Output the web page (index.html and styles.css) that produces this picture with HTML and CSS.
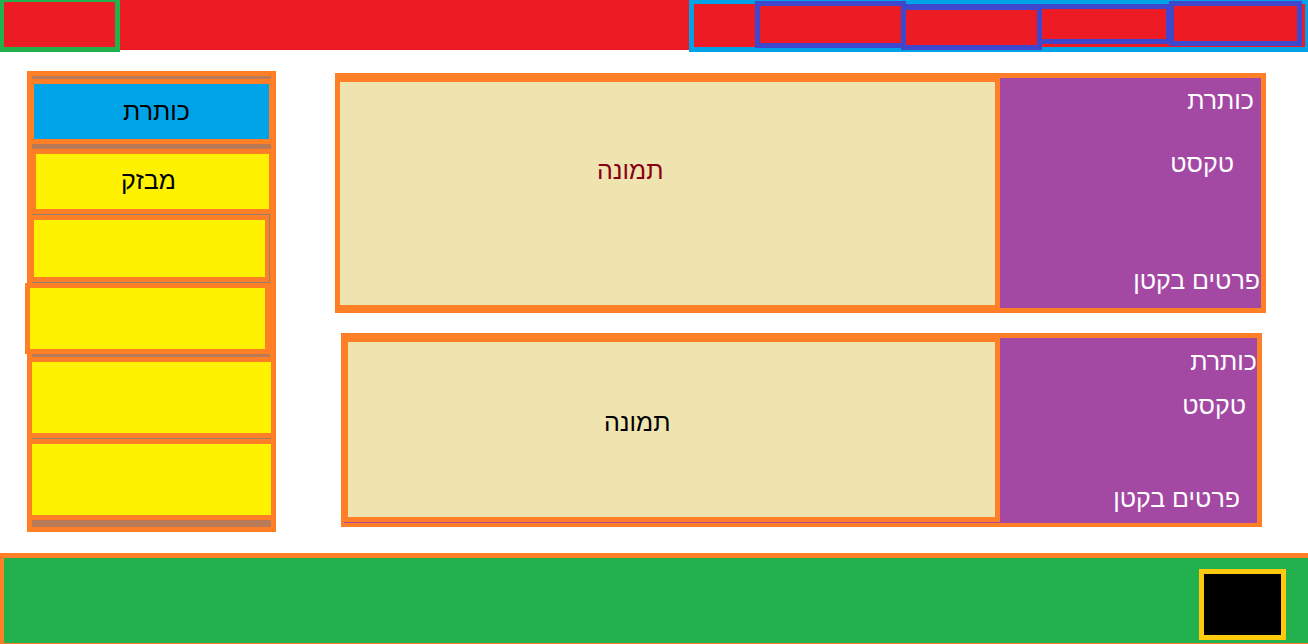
FILE: index.html
```html
<!DOCTYPE html>
<html lang="he">
<head>
<meta charset="utf-8">
<title>Wireframe</title>
<link rel="stylesheet" href="styles.css">
</head>
<body>
<header class="header">
  <div class="logo"></div>
  <nav class="nav">
    <div class="nav-item n1"></div>
    <div class="nav-item n2"></div>
    <div class="nav-item n3"></div>
    <div class="nav-item n4"></div>
  </nav>
</header>

<div class="main">
  <aside class="sidebar">
    <div class="rule r-top"></div>
    <div class="side-title">כותרת</div>
    <div class="rule r-thick"></div>
    <div class="side-flash">מבזק</div>
    <div class="group">
      <div class="side-box g1"></div>
      <div class="sep"></div>
      <div class="g2-wrap"><div class="side-box g2"></div></div>
    </div>
    <div class="rule r-mid"></div>
    <div class="side-box wide"></div>
    <div class="sep wide-sep"></div>
    <div class="side-box wide"></div>
    <div class="rule r-bottom"></div>
  </aside>

  <section class="cards">
    <article class="card card-a">
      <div class="pic pic-a">תמונה</div>
      <div class="info info-a">
        <div class="line a-title">כותרת</div>
        <div class="line a-text">טקסט</div>
        <div class="line a-small">פרטים בקטן</div>
      </div>
    </article>

    <article class="card card-b">
      <div class="row">
        <div class="pic pic-b">תמונה</div>
        <div class="info info-b">
          <div class="line b-title">כותרת</div>
          <div class="line b-text">טקסט</div>
          <div class="line b-small">פרטים בקטן</div>
        </div>
      </div>
    </article>
  </section>
</div>

<footer class="footer">
  <div class="black-box"></div>
</footer>
</body>
</html>
```

FILE: styles.css
```css
* { box-sizing: border-box; }

html, body {
  margin: 0;
  padding: 0;
  background: #ffffff;
  width: 1308px;
  height: 644px;
  overflow: hidden;
  font-family: "Liberation Sans", Arial, sans-serif;
  font-size: 25px;
  line-height: 28px;
}

/* ---------- header ---------- */
.header {
  height: 50px;
  background: #ed1c24;
  display: flex;
  align-items: flex-start;
}

.logo {
  width: 120px;
  height: 52px;
  border: 4px solid #22b14c;
  border-right-width: 5px;
  border-bottom-width: 5px;
  border-top-width: 2px;
  background: #ed1c24;
  flex: none;
}

.nav {
  margin-left: auto;
  width: 619px;
  height: 52px;
  background: #ed1c24;
  border: 5px solid #00a2e8;
  border-top-width: 4px;
  border-right-width: 3px;
  display: flex;
  align-items: flex-start;
  flex: none;
}

.nav-item {
  border: 5px solid #3f48cc;
  background: #ed1c24;
  flex: none;
}
.n1 { margin-left: 61px; margin-top: -3px; width: 151px; height: 47px; }
.n2 { margin-left: -5px; margin-top: 0; width: 141px; height: 46px; border-top-width: 6px; }
.n3 { margin-left: -5px; margin-top: 0; width: 134px; height: 40px; }
.n4 { margin-left: -2px; margin-top: -3px; width: 133px; height: 45px; }

/* ---------- main ---------- */
.main {
  height: 503px;
  display: flex;
  align-items: flex-start;
}

.sidebar {
  margin-left: 27px;
  margin-top: 21px;
  width: 249px;
  height: 461px;
  background: #ff7f27;
  padding-top: 5px;
  display: flex;
  flex-direction: column;
  flex: none;
}

.rule {
  background: #b97a57;
  margin-left: 5px;
  width: 239px;
  flex: none;
}
.r-top { height: 3px; }
.r-thick { height: 5px; margin-top: 5px; }
.r-mid { height: 3px; width: 238px; }
.r-bottom { height: 7px; margin-top: 5px; }

.side-title {
  margin-top: 5px;
  margin-left: 7px;
  width: 235px;
  height: 55px;
  background: #00a2e8;
  color: #000;
  text-align: center;
  padding-top: 13px;
  padding-left: 10px;
  direction: rtl;
  flex: none;
}

.side-flash {
  margin-top: 5px;
  margin-left: 9px;
  width: 233px;
  height: 55px;
  background: #fff200;
  color: #000;
  text-align: center;
  padding-top: 12px;
  padding-right: 8px;
  direction: rtl;
  flex: none;
}

.group {
  margin-top: 5px;
  margin-left: 5px;
  width: 238px;
  border-top: 1px solid #8f7f76;
  border-right: 1px solid #8f7f76;
  flex: none;
}

.side-box {
  background: #fff200;
  flex: none;
}
.g1 {
  margin-top: 5px;
  margin-left: 2px;
  width: 231px;
  height: 57px;
}
.sep {
  margin-top: 5px;
  height: 1px;
  background: #8f7f76;
}
.g2-wrap {
  margin-left: -7px;
  width: 245px;
  height: 71px;
  background: #ff7f27;
  padding: 5px;
}
.g2 {
  width: 235px;
  height: 61px;
}

.wide {
  margin-top: 5px;
  margin-left: 5px;
  width: 239px;
  height: 71px;
}
.wide-sep {
  margin-left: 5px;
  width: 239px;
  background: #a0806c;
  flex: none;
}

/* ---------- cards ---------- */
.cards {
  margin-left: 61px;
  margin-top: 23px;
  display: flex;
  flex-direction: column;
  gap: 20px;
}

.card {
  background: #ff7f27;
  display: flex;
  align-items: stretch;
}

.card-a {
  width: 929px;
  height: 240px;
  padding: 5px 5px 5px 3px;
  gap: 5px;
  box-shadow: -2px 0 0 0 #ff7f27;
}

.card-b {
  margin-left: 4px;
  width: 921px;
  height: 194px;
  padding: 5px 5px 4px 3px;
}

.row {
  flex: 1;
  display: flex;
  gap: 5px;
  padding-left: 4px;
  border-bottom: 1px solid #a349a4;
}

.pic {
  background: #efe4b0;
  flex: none;
  white-space: nowrap;
}
.pic-a {
  width: 655px;
  margin-top: 4px;
  margin-bottom: 3px;
  padding-top: 74px;
  padding-left: 257px;
  color: #880015;
}
.pic-b {
  width: 647px;
  margin-top: 4px;
  margin-bottom: 5px;
  padding-top: 66px;
  padding-left: 256px;
  color: #000;
}

.info {
  background: #a349a4;
  color: #ffffff;
  direction: rtl;
  text-align: right;
  flex: none;
}
.info-a { width: 261px; }
.info-b { width: 257px; }

.line { white-space: nowrap; }
.a-title { margin-top: 8px; padding-right: 7px; }
.a-text { margin-top: 35px; padding-right: 27px; }
.a-small { margin-top: 89px; padding-right: 1px; }
.b-title { margin-top: 9px; padding-right: 0; }
.b-text { margin-top: 16px; padding-right: 11px; }
.b-small { margin-top: 65px; padding-right: 17px; }

/* ---------- footer ---------- */
.footer {
  height: 91px;
  background: #22b14c;
  border-top: 5px solid #ff7f27;
  border-left: 4px solid #ff7f27;
  border-bottom: 1px solid #ff7f27;
  display: flex;
  justify-content: flex-end;
  align-items: flex-start;
  padding-right: 22px;
}

.black-box {
  margin-top: 11px;
  width: 87px;
  height: 71px;
  background: #000;
  border: 5px solid #ffc90e;
}
```
